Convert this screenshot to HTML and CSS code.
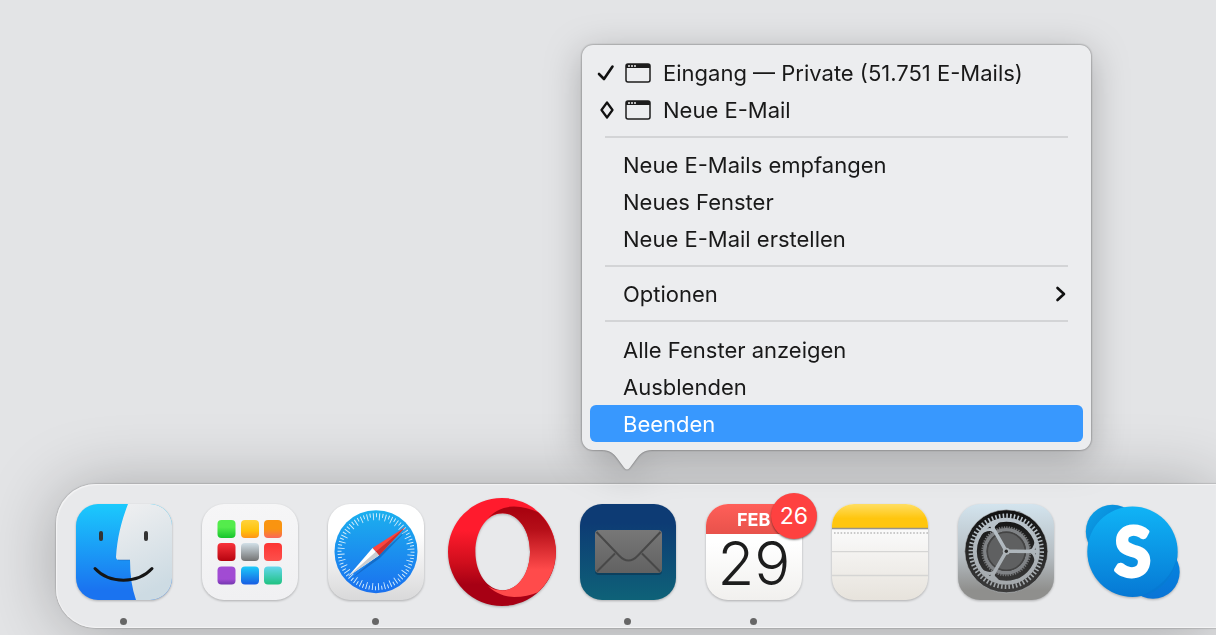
FILE: index.html
```html
<!DOCTYPE html>
<html lang="de">
  <head>
    <meta charset="UTF-8" />
    <meta name="viewport" content="width=device-width, initial-scale=1.0" />
    <title>Dock</title>
    <link rel="stylesheet" href="styles.css">
  </head>
  <body>
    <ul class="dock">
      <li class="dock-item running">
        <button class="app" aria-label="Finder">
          <svg viewBox="0 0 126 126">
            <defs>
              <linearGradient id="finder-blue" x2="0" y2="1">
                <stop offset="0" stop-color="#1bcafd" />
                <stop offset="0.9" stop-color="#1a73f0" />
              </linearGradient>
              <linearGradient id="finder-white" x2="0.3" y2="1">
                <stop offset="0" stop-color="#f0f0f1" />
                <stop offset="1" stop-color="#cddbe3" />
              </linearGradient>
              <clipPath id="tile"><rect x="15" y="20" width="96" height="96" rx="22" /></clipPath>
            </defs>
            <g clip-path="url(#tile)">
              <rect x="15" y="20" width="96" height="96" fill="url(#finder-blue)" />
              <path d="M67 20C60 38 56 55 55 73Q55 76 58 76H69Q69 99 75 116H111V20Z" fill="url(#finder-white)" />
              <path d="M57 76H69" fill="none" stroke="#1c5dab" stroke-opacity=".5" />
            </g>
            <path d="M40 49V55M85 49V55" stroke="#333" stroke-width="4" stroke-linecap="round" />
            <path d="M34 84.500C48 100 77 100 91 84.500" fill="none" stroke="#151515" stroke-width="3" stroke-linecap="round" />
          </svg>
        </button>
      </li>

      <li class="dock-item">
        <button class="app" aria-label="Launchpad">
          <svg viewBox="0 0 126 126">
            <defs>
              <linearGradient id="lp-bg" x2="0" y2="1"><stop stop-color="#f6f6f7" /><stop offset="1" stop-color="#f0f0f2" /></linearGradient>
              <linearGradient id="lp1" x2="0" y2="1"><stop offset=".4" stop-color="#54ec4c" /><stop offset="1" stop-color="#16c42c" /></linearGradient>
              <linearGradient id="lp2" x2="0" y2="1"><stop stop-color="#ffd33b" /><stop offset=".6" stop-color="#ffc20b" /><stop offset="1" stop-color="#ff9417" /></linearGradient>
              <linearGradient id="lp3" x2="0" y2="1"><stop offset=".5" stop-color="#f99410" /><stop offset="1" stop-color="#fa665a" /></linearGradient>
              <linearGradient id="lp4" x2="0" y2="1"><stop stop-color="#f9323a" /><stop offset="1" stop-color="#b6040f" /></linearGradient>
              <linearGradient id="lp5" x2="0" y2="1"><stop stop-color="#d2e0e8" /><stop offset="1" stop-color="#737373" /></linearGradient>
              <linearGradient id="lp6" x2="0" y2="1"><stop stop-color="#fc3432" /><stop offset="1" stop-color="#fd504c" /></linearGradient>
              <linearGradient id="lp7" x2="0" y2="1"><stop offset=".7" stop-color="#a14bd3" /><stop offset="1" stop-color="#7336af" /></linearGradient>
              <linearGradient id="lp8" x2="0" y2="1"><stop stop-color="#1bcafa" /><stop offset="1" stop-color="#185ce3" /></linearGradient>
              <linearGradient id="lp9" x2="0" y2="1"><stop stop-color="#64d7ed" /><stop offset="1" stop-color="#20c281" /></linearGradient>
            </defs>
            <rect x="15" y="20" width="96" height="96" rx="22" fill="url(#lp-bg)" />
            <rect x="30.500" y="36" width="18" height="18" rx="4" fill="url(#lp1)" />
            <rect x="54" y="36" width="18" height="18" rx="4" fill="url(#lp2)" />
            <rect x="77" y="36" width="18" height="18" rx="4" fill="url(#lp3)" />
            <rect x="30.500" y="59" width="18" height="18" rx="4" fill="url(#lp4)" />
            <rect x="54" y="59" width="18" height="18" rx="4" fill="url(#lp5)" />
            <rect x="77" y="59" width="18" height="18" rx="4" fill="url(#lp6)" />
            <rect x="30.500" y="82.500" width="18" height="18" rx="4" fill="url(#lp7)" />
            <rect x="54" y="82.500" width="18" height="18" rx="4" fill="url(#lp8)" />
            <rect x="77" y="82.500" width="18" height="18" rx="4" fill="url(#lp9)" />
          </svg>
        </button>
      </li>

      <li class="dock-item running">
        <button class="app" aria-label="Safari">
          <svg viewBox="0 0 126 126">
            <defs>
              <linearGradient id="safari-bg" x2="0" y2="1"><stop offset=".3" stop-color="#fff" /><stop offset="1" stop-color="#d9d9da" /></linearGradient>
              <linearGradient id="safari-blue" x2="0" y2="1"><stop stop-color="#1cb0ee" /><stop offset="1" stop-color="#1a70ef" /></linearGradient>
            </defs>
            <rect x="15" y="20" width="96" height="96" rx="22" fill="url(#safari-bg)" />
            <circle cx="63" cy="67.700" r="41.500" fill="url(#safari-blue)" />
            <circle cx="63" cy="67.700" r="36.500" fill="none" stroke="#d5edfb" stroke-width="4" pathLength="144" stroke-dasharray="0.600 3.400" />
            <circle cx="63" cy="67.700" r="35" fill="none" stroke="#d5edfb" stroke-width="7" pathLength="144" stroke-dasharray="0.600 3.400" stroke-dashoffset="2" />
            <path d="M95 45L67 74L38 95Z" fill="#0b4b9d" opacity=".45" />
            <path d="M92.500 43L59.500 64L66 71.500Z" fill="#fb453f" />
            <path d="M92.500 43L62.800 67.700L66 71.500Z" fill="#c9302f" />
            <path d="M35 92.500L59.500 64L66 71.500Z" fill="#fff" />
            <path d="M35 92.500L62.800 67.700L66 71.500Z" fill="#c9cdd1" />
          </svg>
        </button>
      </li>

      <li class="dock-item">
        <button class="app" aria-label="Opera">
          <svg viewBox="0 0 126 126">
            <defs>
              <linearGradient id="opera-left" x2="0" y2="1"><stop offset=".3" stop-color="#ff1b2d" /><stop offset=".6" stop-color="#cf0e1c" /><stop offset=".8" stop-color="#a70014" /></linearGradient>
              <linearGradient id="opera-right" x2="0" y2="1"><stop offset=".05" stop-color="#a90310" /><stop offset=".25" stop-color="#b50e18" /><stop offset=".7" stop-color="#ff4b4b" /></linearGradient>
            </defs>
            <path d="M63 14A54 54 0 1 0 63 122A54 54 0 1 0 63 14ZM63.700 29.300C79 29.300 91 46 91 67.800S79 106.300 63.700 106.300S36.400 89 36.400 67.800S48 29.300 63.700 29.300Z" fill="url(#opera-left)" fill-rule="evenodd" />
            <path d="M49 34C57 26 66 22.500 75 22.500C84 22.500 92 25 99 28.200A54 54 0 0 1 99 108.200C92 111 84 113 75 113C66 113 57 109.500 49 102C53 105 58 106.500 63.700 106.300C79 106.300 91 89 91 67.800S79 29.300 63.700 29.300C58 29.300 53 31 49 34Z" fill="url(#opera-right)" />
          </svg>
        </button>
      </li>

      <li class="dock-item running">
        <div class="menu" role="menu" aria-label="Mail">
          <button class="menu-row" role="menuitem">
            <svg class="mark" viewBox="0 0 18 18"><path d="M2 10L7 15L15.500 2.500" fill="none" stroke="#111" stroke-width="2.600" stroke-linecap="round" stroke-linejoin="round" /></svg>
            <svg class="window" viewBox="0 0 28 20"><rect x="1" y="1" width="24" height="18" rx="2" fill="none" stroke="#1c1c1c" stroke-width="1.500" /><path d="M1 1H25V5H1Z" fill="#1c1c1c" /><path d="M3 3H11" stroke="#eee" stroke-width="1.500" stroke-dasharray="2 1" /></svg>
            Eingang — Private (51.751 E-Mails)
          </button>
          <button class="menu-row" role="menuitem">
            <svg class="mark" viewBox="0 0 18 18"><path d="M10 1.500L15.500 9L10 16.500L4.500 9Z" fill="none" stroke="#111" stroke-width="2.200" stroke-linejoin="round" /></svg>
            <svg class="window" viewBox="0 0 28 20"><rect x="1" y="1" width="24" height="18" rx="2" fill="none" stroke="#1c1c1c" stroke-width="1.500" /><path d="M1 1H25V5H1Z" fill="#1c1c1c" /><path d="M3 3H11" stroke="#eee" stroke-width="1.500" stroke-dasharray="2 1" /></svg>
            Neue E-Mail
          </button>
          <hr>
          <button class="menu-row text-only" role="menuitem">Neue E-Mails empfangen</button>
          <button class="menu-row text-only" role="menuitem">Neues Fenster</button>
          <button class="menu-row text-only" role="menuitem">Neue E-Mail erstellen</button>
          <hr>
          <button class="menu-row text-only" role="menuitem" aria-haspopup="true">
            Optionen
            <svg class="chevron" viewBox="0 0 12 18"><path d="M2.500 3L9 9L2.500 15" fill="none" stroke="#111" stroke-width="2.600" stroke-linecap="round" stroke-linejoin="round" /></svg>
          </button>
          <hr>
          <button class="menu-row text-only" role="menuitem">Alle Fenster anzeigen</button>
          <button class="menu-row text-only" role="menuitem">Ausblenden</button>
          <button class="menu-row text-only selected" role="menuitem">Beenden</button>
          <svg class="menu-arrow" viewBox="0 0 50 22"><path d="M0 0V1C8 1 12 5 15 9L22 18.500Q25 22.500 28 18.500L35 9C38 5 42 1 50 1V0Z" fill="#ecedee" /></svg>
        </div>
        <button class="app" aria-label="Mail">
          <svg viewBox="0 0 126 126">
            <defs>
              <linearGradient id="mail-bg" x2="0" y2="1"><stop offset=".2" stop-color="#0d3b74" /><stop offset="1" stop-color="#0e6278" /></linearGradient>
              <linearGradient id="mail-paper" x2="0" y2="1"><stop stop-color="#777" /><stop offset="1" stop-color="#626262" /></linearGradient>
            </defs>
            <rect x="15" y="20" width="96" height="96" rx="22" fill="url(#mail-bg)" />
            <rect x="30" y="48" width="67" height="43" rx="4" fill="#092c45" opacity=".5" />
            <rect x="30" y="46" width="67" height="43" rx="4" fill="url(#mail-paper)" />
            <path d="M32 87.500L50 69.500M95 87.500L77 69.500M31.500 48L54 71.500Q63.500 81.500 73 71.500L95.500 48" fill="none" stroke="#484848" stroke-width="2" />
          </svg>
        </button>
      </li>

      <li class="dock-item running">
        <button class="app" aria-label="Kalender, 26 Hinweise">
          <svg viewBox="0 0 126 126">
            <defs>
              <linearGradient id="cal-bg" x2="0" y2="1"><stop offset=".4" stop-color="#fff" /><stop offset="1" stop-color="#f1f0ee" /></linearGradient>
              <linearGradient id="cal-red" x2="0" y2="1"><stop stop-color="#ff5f59" /><stop offset="1" stop-color="#e8524b" /></linearGradient>
            </defs>
            <g clip-path="url(#tile)">
              <rect x="15" y="20" width="96" height="96" fill="url(#cal-bg)" />
              <rect x="15" y="20" width="96" height="30" fill="url(#cal-red)" />
            </g>
            <text class="cal-month" x="46" y="42">FEB</text>
            <text class="cal-day" x="63" y="101">29</text>
          </svg>
          <span class="badge">26</span>
        </button>
      </li>

      <li class="dock-item">
        <button class="app" aria-label="Notizen">
          <svg viewBox="0 0 126 126">
            <defs>
              <linearGradient id="notes-bg" x2="0" y2="1"><stop offset=".3" stop-color="#f9f9f9" /><stop offset="1" stop-color="#e7e3dc" /></linearGradient>
              <linearGradient id="notes-top" x2="0" y2="1"><stop stop-color="#ffde62" /><stop offset=".6" stop-color="#ffc60e" /></linearGradient>
            </defs>
            <g clip-path="url(#tile)">
              <rect x="15" y="20" width="96" height="96" fill="url(#notes-bg)" />
              <rect x="15" y="20" width="96" height="24" fill="url(#notes-top)" />
              <path d="M15 44.500H111" stroke="#96938c" stroke-width="1.500" />
              <path d="M17 49H111" stroke="#c9c9c9" stroke-width="1.800" stroke-dasharray="1.600 1.700" />
              <path d="M15 67.700H111M15 91.500H111" stroke="#d5d5d4" stroke-width="1.300" />
            </g>
          </svg>
        </button>
      </li>

      <li class="dock-item">
        <button class="app" aria-label="Systemeinstellungen">
          <svg viewBox="0 0 126 126">
            <defs>
              <linearGradient id="set-bg" x2="0" y2="1"><stop stop-color="#d3e4ee" /><stop offset=".55" stop-color="#b5bcc1" /><stop offset=".9" stop-color="#8f8f8d" /></linearGradient>
              <linearGradient id="set-well" x2="0" y2="1"><stop stop-color="#111" /><stop offset="1" stop-color="#3c3c3c" /></linearGradient>
              <linearGradient id="set-metal" gradientUnits="userSpaceOnUse" x1="0" y1="28" x2="0" y2="107"><stop stop-color="#bdc8d0" /><stop offset="1" stop-color="#a0a4a7" /></linearGradient>
            </defs>
            <rect x="15" y="20" width="96" height="96" rx="22" fill="url(#set-bg)" />
            <circle cx="63.300" cy="67.300" r="41.500" fill="url(#set-well)" stroke="#b9bec2" stroke-opacity=".6" />
            <circle cx="63.300" cy="67.300" r="35.500" fill="none" stroke="url(#set-metal)" stroke-width="4.500" pathLength="240" stroke-dasharray="1.700 2.300" />
            <circle cx="63.300" cy="67.300" r="24" fill="#404142" stroke="#77797b" stroke-width="2" pathLength="240" stroke-dasharray="2 2" />
            <circle cx="63.300" cy="67.300" r="21.500" fill="none" stroke="#808386" stroke-width="3.500" />
            <circle cx="63.300" cy="67.300" r="19" fill="#5f6061" stroke="#444" stroke-width="1.500" />
            <circle cx="63.300" cy="67.300" r="31.500" fill="none" stroke="url(#set-metal)" stroke-width="4" />
            <g fill="none" stroke="url(#set-metal)" stroke-linecap="round">
              <path d="M63.300 67.300L94 67.400M63.300 67.300L48 40.500M63.300 67.300L48 94" stroke-width="3.500" />
              <path d="M93 59Q91 66.500 87 67.300Q91 68 93 75.500M54 38.500Q48 43 50.500 47Q48 44 40.500 47M54 96Q48 92 50.500 88Q48 91 40.500 88" stroke-width="3" />
            </g>
            <circle cx="63.300" cy="67.300" r="3.500" fill="#aeb4b8" />
            <circle cx="63.300" cy="67.300" r="1.700" fill="#2c2c2c" />
          </svg>
        </button>
      </li>

      <li class="dock-item">
        <button class="app" aria-label="Skype">
          <svg viewBox="0 0 126 126">
            <defs>
              <linearGradient id="sky-main" x2="0" y2="1"><stop stop-color="#10b4f6" /><stop offset="1" stop-color="#0678d4" /></linearGradient>
              <linearGradient id="sky-tl" x2="1" y2="1"><stop stop-color="#0ca4e8" /><stop offset=".7" stop-color="#0778d0" /></linearGradient>
              <linearGradient id="sky-br" x2="0" y2="1"><stop offset=".3" stop-color="#0583df" /><stop offset="1" stop-color="#0a74d6" /></linearGradient>
            </defs>
            <circle cx="43.500" cy="47.500" r="26.700" fill="url(#sky-tl)" />
            <circle cx="84" cy="88" r="26.700" fill="url(#sky-br)" />
            <circle cx="63.500" cy="67.700" r="45.200" fill="url(#sky-main)" />
            <path d="M108.400 72A45 45 0 0 1 72 112C91 104 104 91 108.400 72Z" fill="#0776d0" opacity=".6" />
            <text class="skype-letter" x="63.500" y="92">S</text>
          </svg>
        </button>
      </li>
    </ul>
  </body>
</html>
```

FILE: styles.css
```css
* {
  box-sizing: border-box;
}
body {
  font-family: Inter, "Liberation Sans", sans-serif;
  background-color: #e3e4e6;
  display: flex;
  flex-direction: column;
  justify-content: flex-end;
  min-height: 100vh;
  margin: 0;
  padding: 0 0 7px 56px;
  overflow: hidden;
}
button {
  font: inherit;
  color: inherit;
  background: none;
  border: none;
  padding: 0;
}
.dock {
  display: flex;
  height: 144px;
  margin: 0;
  padding: 0 0 0 5px;
  list-style: none;
  background-color: #e8e9eb;
  border-radius: 40px 0 0 40px;
  box-shadow: inset 1px 1px 1px #f4f4f5, inset 0 -1px 1px #f4f4f5,
    0 0 1px 1px rgba(0, 0, 0, 0.12), 0 4px 70px rgba(0, 0, 0, 0.28);
}
.dock-item {
  position: relative;
  flex: none;
  width: 126px;
  display: flex;
  flex-direction: column;
  align-items: center;
}
.app {
  position: relative;
  display: block;
}
.app svg {
  display: block;
  width: 126px;
  height: 126px;
  overflow: visible;
  filter: drop-shadow(0 1px 1px rgba(0, 0, 0, 0.25));
}
.running::after {
  content: "";
  width: 7px;
  height: 7px;
  margin: 8px 2px 0 0;
  border-radius: 50%;
  background-color: #666;
}
.cal-month {
  font-size: 18px;
  font-weight: 700;
  fill: #fff;
}
.cal-day {
  font-size: 60px;
  font-weight: 300;
  text-anchor: middle;
  fill: #1d1d1d;
}
.skype-letter {
  font-family: Lato, sans-serif;
  font-size: 66px;
  font-weight: 700;
  text-anchor: middle;
  fill: #fff;
  stroke: #fff;
  stroke-width: 4px;
  stroke-linejoin: round;
}
.badge {
  position: absolute;
  top: 9px;
  right: 0;
  width: 46px;
  height: 46px;
  line-height: 46px;
  border-radius: 50%;
  background-color: #fe4140;
  box-shadow: 0 1px 2px rgba(0, 0, 0, 0.5);
  color: #fff;
  font-size: 23px;
  text-align: center;
}
.menu {
  position: absolute;
  left: 17px;
  bottom: calc(100% + 34px);
  width: 509px;
  padding: 9px 8px 8px;
  border-radius: 11px;
  background-color: #ecedef;
  color: #191919;
  font-size: 22px;
  filter: drop-shadow(0 0 1px rgba(0, 0, 0, 0.5))
    drop-shadow(0 8px 18px rgba(0, 0, 0, 0.25));
}
.menu-row {
  display: flex;
  align-items: center;
  gap: 10px;
  width: 100%;
  height: 37px;
  padding: 0 16px 0 7px;
  border-radius: 6px;
  text-align: left;
  white-space: nowrap;
}
.text-only {
  padding-left: 33px;
}
.selected {
  background-color: #3898fe;
  color: #fff;
}
.menu hr {
  height: 2px;
  margin: 8px 15px;
  border: none;
  background-color: #d3d4d6;
}
.menu hr:last-of-type {
  margin-bottom: 9px;
}
.mark {
  width: 18px;
  height: 18px;
}
.window {
  width: 28px;
  height: 20px;
}
.chevron {
  width: 12px;
  height: 18px;
  margin-left: auto;
}
.menu-arrow {
  position: absolute;
  top: calc(100% - 1px);
  left: 20px;
  width: 50px;
  height: 22px;
}
```
